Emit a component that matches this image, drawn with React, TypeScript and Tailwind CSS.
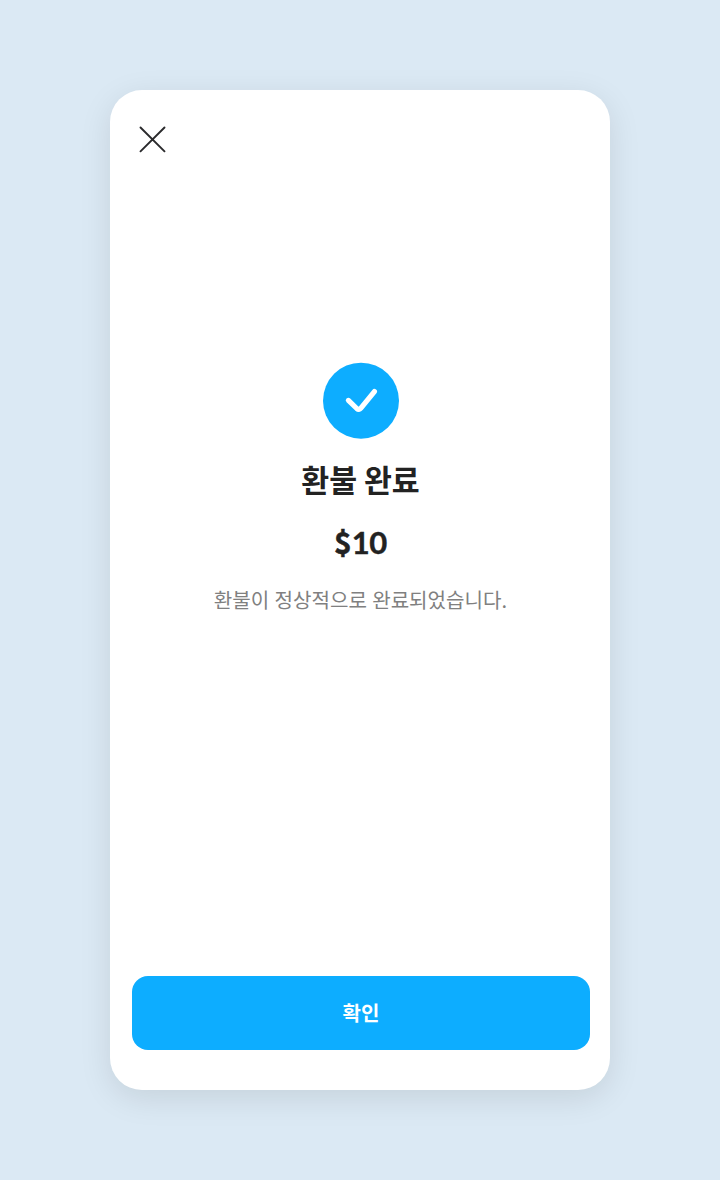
import { useState } from "react";

export default function App() {
  const [open, setOpen] = useState(true);

  return (
    <main className="flex h-[1180px] w-[720px] items-center justify-center bg-[#dbe9f4] font-['Noto_Sans_CJK_KR',sans-serif]">
      {open ? <RefundComplete amount={10} onClose={() => setOpen(false)} /> : null}
    </main>
  );
}

function RefundComplete({ amount, onClose }: { amount: number; onClose: () => void }) {
  return (
    <section className="flex h-[1000px] w-[500px] flex-col rounded-[32px] bg-white pr-5 pb-[40.5px] pl-[22px] shadow-[0_8px_32px_rgba(0,0,0,0.1)]">
      <header className="flex pt-9 pl-[7px]">
        <button type="button" aria-label="닫기" onClick={onClose}>
          <CloseIcon />
        </button>
      </header>
      <div className="mt-[209px] flex flex-1 flex-col items-center text-center">
        <CheckBadge />
        <h1 className="mt-[18px] pr-px text-[30.3px] leading-[44px] font-bold text-[#222]">환불 완료</h1>
        <p className="mt-5 flex h-10 items-baseline pr-px text-[31px] leading-[40px] font-bold text-[#222]">
          <span className="text-[30px] [-webkit-text-stroke:0.5px_#222]">$</span>
          <span className="font-['Lato',sans-serif] tracking-[-0.3px] [-webkit-text-stroke:0.4px_#222]">{amount}</span>
        </p>
        <p className="mt-6 pr-px text-[20.1px] leading-[30px] [word-spacing:0.7px] text-[#808080]">
          환불이 정상적으로 완료되었습니다.
        </p>
      </div>
      <button
        type="button"
        className="h-[73.5px] w-full rounded-[16px] bg-[#0dadff] text-[20px] font-bold text-white"
        onClick={onClose}
      >
        확인
      </button>
    </section>
  );
}

function CloseIcon() {
  return (
    <svg width="27" height="27" viewBox="0 0 27 27" fill="none" stroke="#2a2a2c" strokeWidth="1.9" strokeLinecap="round">
      <path d="M1.5 1.5 25.5 25.3M25.5 1.5 1.5 25.3" />
    </svg>
  );
}

function CheckBadge() {
  return (
    <svg width="76" height="77" viewBox="0 0 76 77" fill="none">
      <circle cx="38" cy="38.7" r="38" fill="#0dadff" />
      <path
        d="M25.4 38.4 33.8 46.5Q36 48.5 37.9 46.2L51.4 29.6"
        stroke="#fff"
        strokeWidth="5.2"
        strokeLinecap="round"
        strokeLinejoin="round"
      />
    </svg>
  );
}
